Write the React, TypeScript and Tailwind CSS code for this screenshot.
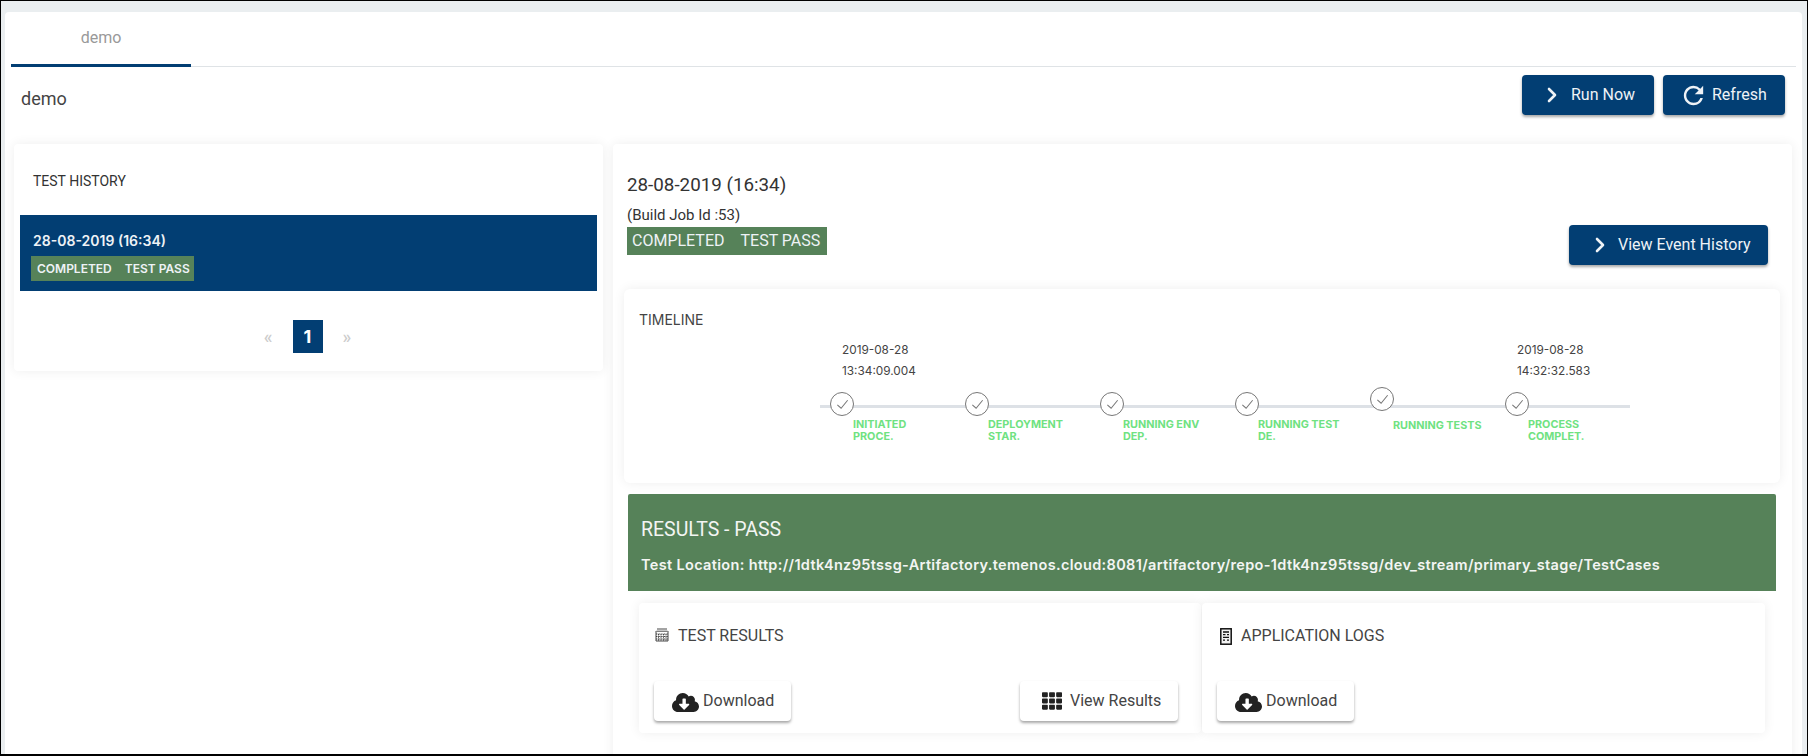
import React from "react";
import { ChevronRight } from "lucide-react";
import { FaCloudDownloadAlt, FaTh } from "react-icons/fa";
import { MdRefresh } from "react-icons/md";

const roboto = "font-['Roboto',sans-serif]";
const inter = "font-['Inter',sans-serif]";
const softShadow = "shadow-[0_0_12px_rgba(0,0,0,0.07)]";
const btnShadow = "shadow-[0_2px_3px_rgba(0,0,0,0.35)]";

function NavyButton({ children, className }: { children: React.ReactNode; className: string }) {
  return (
    <button className={`flex h-10 items-center rounded-[4px] bg-[#023e73] text-[16px] text-[#eef2f6] ${btnShadow} ${className}`}>
      {children}
    </button>
  );
}

function WhiteButton({ children, className }: { children: React.ReactNode; className: string }) {
  return (
    <button className={`flex h-10 items-center rounded-[4px] bg-white text-[16px] text-[#444] ${btnShadow} ${className}`}>
      {children}
    </button>
  );
}

const steps: { lines: string[]; date?: string[]; raised?: boolean }[] = [
  { lines: ["INITIATED", "PROCE."], date: ["2019-08-28", "13:34:09.004"] },
  { lines: ["DEPLOYMENT", "STAR."] },
  { lines: ["RUNNING ENV", "DEP."] },
  { lines: ["RUNNING TEST", "DE."] },
  { lines: ["RUNNING TESTS"], raised: true },
  { lines: ["PROCESS", "COMPLET."], date: ["2019-08-28", "14:32:32.583"] },
];

function Step({ step }: { step: (typeof steps)[number] }) {
  return (
    <div className="flex w-[135px] shrink-0 flex-col">
      <div className={`h-[62px] pl-[12px] ${inter} text-[11.8px] leading-[21px] text-[#444]`}>
        {step.date && (
          <div className="pt-[10px] whitespace-nowrap">
            <div>{step.date[0]}</div>
            <div>{step.date[1]}</div>
          </div>
        )}
      </div>
      <div className={`z-10 flex h-6 w-6 items-center justify-center rounded-full border border-[#777] bg-white ${step.raised ? "-translate-y-[5px]" : ""}`}>
        <svg viewBox="0 0 16 16" className="h-[15px] w-[15px]" fill="none" stroke="#777" strokeWidth="1.1">
          <path d="M2.5 8.5 L6.5 12 L13.5 3.5" />
        </svg>
      </div>
      <div className={`ml-[23px] ${step.raised ? "mt-[4px]" : "mt-[3px]"} ${inter} text-[10.8px] font-bold leading-[12px] text-[#6fe281]`}>
        {step.lines.map((l) => (
          <div key={l} className="whitespace-nowrap">{l}</div>
        ))}
      </div>
    </div>
  );
}

function CalendarIcon() {
  return (
    <svg viewBox="0 0 14 14" className="h-[14px] w-[14px] shrink-0" fill="none" stroke="#333" strokeWidth="0.9">
      <path d="M2 1 H12 M1.5 3.2 H12.5 M1 3 V13 H13 V3" />
      <path d="M1 6 H13 M1 8.5 H13 M1 11 H13" strokeDasharray="1 0.6" />
      <path d="M3.5 6 V13 M6 6 V13 M8.5 6 V13 M11 6 V13" strokeDasharray="1 0.6" />
    </svg>
  );
}

function LogIcon() {
  return (
    <svg viewBox="0 0 12 17" className="h-[17px] w-[12px] shrink-0" fill="none" stroke="#111" strokeWidth="1.5">
      <rect x="0.8" y="0.8" width="10.4" height="15.4" fill="#f2f2f2" />
      <path d="M3 4 H9 M3 6.7 H5.5 M7 6.7 H9 M3 9.4 H9 M3 12.1 H5 M7 12.1 H9" strokeWidth="1.3" />
    </svg>
  );
}

export default function App() {
  return (
    <div className={`flex h-[756px] w-[1808px] flex-col overflow-hidden border-t border-r border-b-2 border-l border-black bg-[#eaeef0] ${roboto}`}>
      <div className="mt-[11px] mr-[5px] ml-1 flex min-h-0 flex-1 flex-col overflow-hidden rounded-t-[4px] bg-white">
        {/* Tabs */}
        <div className="mx-[6px] flex h-[55px] shrink-0 border-b border-[#dfe3e6]">
          <div className="-mb-px flex w-[180px] items-center justify-center border-b-[3px] border-[#023e73] text-[16px] text-[#999]">
            demo
          </div>
        </div>

        {/* Title row */}
        <div className="flex h-[77px] shrink-0 items-start justify-between pt-[8px] pr-[17px] pl-[16px]">
          <div className="pt-[10px] text-[18px] leading-[28px] text-[#444]">demo</div>
          <div className="flex gap-[9px]">
            <NavyButton className="w-[132px]">
              <ChevronRight size={24} strokeWidth={2.6} className="ml-[18px]" />
              <span className="ml-[7px]">Run Now</span>
            </NavyButton>
            <NavyButton className="w-[122px]">
              <MdRefresh size={29} className="ml-[16px]" />
              <span className="ml-[4px]">Refresh</span>
            </NavyButton>
          </div>
        </div>

        {/* Columns */}
        <div className="flex min-h-0 flex-1 items-start gap-[10px] pl-[9px]">
          {/* Left card */}
          <div className={`h-[227px] w-[589px] shrink-0 rounded-[4px] bg-white px-[6px] ${softShadow}`}>
            <div className="h-[71px] pt-[27px] pl-[13px] text-[14px] leading-[20px] text-[#333]">TEST HISTORY</div>
            <div className="h-[76px] bg-[#023e73] pt-[16px] pl-[11px]">
              <div className={`ml-[2px] ${inter} text-[14px] leading-[20px] font-semibold text-[#eef2f6]`}>28-08-2019 (16:34)</div>
              <div className={`mt-[5px] flex h-[25px] w-[163px] items-center gap-[13px] bg-[#568259] pl-[6px] ${inter} text-[12px] font-semibold text-[#eef2f6]`}>
                <span>COMPLETED</span>
                <span>TEST PASS</span>
              </div>
            </div>
            <div className="mt-[29px] mr-[2px] flex items-center justify-center">
              <span className="text-[18px] font-medium text-[#ccc]">«</span>
              <span className={`mx-[20px] flex h-[33px] w-[30px] items-center justify-center bg-[#023e73] ${inter} text-[18px] font-bold text-white`}>1</span>
              <span className="text-[18px] font-medium text-[#ccc]">»</span>
            </div>
          </div>

          {/* Right card */}
          <div className={`flex h-[700px] w-[1179px] shrink-0 flex-col rounded-[4px] bg-white pl-[11px] ${softShadow}`}>
            <div className="flex h-[145px] shrink-0 justify-between pr-[24px] pl-[3px]">
              <div>
                <div className="pt-[29px] text-[18.8px] leading-[24px] text-[#333]">28-08-2019 (16:34)</div>
                <div className="mt-[9px] text-[15px] leading-[18px] text-[#333]">(Build Job Id :53)</div>
                <div className="mt-[3px] flex h-[28px] w-[200px] items-center gap-[16px] bg-[#568259] pl-[5px] text-[16px] text-[#eef2f6]">
                  <span>COMPLETED</span>
                  <span>TEST PASS</span>
                </div>
              </div>
              <NavyButton className="mt-[81px] w-[199px]">
                <ChevronRight size={24} strokeWidth={2.6} className="ml-[19px]" />
                <span className="ml-[6px] whitespace-nowrap">View Event History</span>
              </NavyButton>
            </div>

            {/* Timeline */}
            <div className={`h-[194px] w-[1156px] shrink-0 rounded-[6px] bg-white ${softShadow}`}>
              <div className={`pt-[23px] pl-[15px] ${inter} text-[14px] leading-[16px] text-[#444]`}>TIMELINE</div>
              <div className="relative mt-[2px] ml-[206px] flex">
                <div className="absolute top-[75px] -left-[10px] h-[3px] w-[810px] bg-[#dde1e6]" />
                {steps.map((s, i) => (
                  <Step key={i} step={s} />
                ))}
              </div>
            </div>

            {/* Results banner */}
            <div className="mt-[11px] ml-[4px] h-[97px] w-[1148px] shrink-0 rounded-t-[2px] bg-[#568259] pl-[13px] text-[#f3f5f3]">
              <div className="pt-[24px] text-[19.5px] leading-[24px]">RESULTS - PASS</div>
              <div className={`mt-[13px] whitespace-nowrap ${inter} text-[14.5px] leading-[20px] font-semibold tracking-[0.34px]`}>
                Test Location: http://1dtk4nz95tssg-Artifactory.temenos.cloud:8081/artifactory/repo-1dtk4nz95tssg/dev_stream/primary_stage/TestCases
              </div>
            </div>

            {/* Result cards */}
            <div className="mt-[12px] ml-[15px] flex gap-px">
              <div className={`h-[130px] w-[562px] rounded-[4px] bg-white ${softShadow}`}>
                <div className="flex h-[78px] items-start gap-[9px] pt-[25px] pl-[16px] text-[16px] leading-[16px] text-[#444]">
                  <CalendarIcon />
                  <span>TEST RESULTS</span>
                </div>
                <div className="flex justify-between pr-[23px] pl-[15px]">
                  <WhiteButton className="w-[137px]">
                    <FaCloudDownloadAlt size={27} className="ml-[18px] translate-y-px text-[#222]" />
                    <span className="ml-[4px]">Download</span>
                  </WhiteButton>
                  <WhiteButton className="w-[158px]">
                    <FaTh size={20} className="ml-[22px] text-[#222]" />
                    <span className="ml-[8px]">View Results</span>
                  </WhiteButton>
                </div>
              </div>
              <div className={`h-[130px] w-[563px] rounded-[4px] bg-white ${softShadow}`}>
                <div className="flex h-[78px] items-start gap-[9px] pt-[25px] pl-[18px] text-[16px] leading-[16px] text-[#444]">
                  <LogIcon />
                  <span>APPLICATION LOGS</span>
                </div>
                <div className="pl-[15px]">
                  <WhiteButton className="w-[137px]">
                    <FaCloudDownloadAlt size={27} className="ml-[18px] translate-y-px text-[#222]" />
                    <span className="ml-[4px]">Download</span>
                  </WhiteButton>
                </div>
              </div>
            </div>
          </div>
        </div>
      </div>
    </div>
  );
}
